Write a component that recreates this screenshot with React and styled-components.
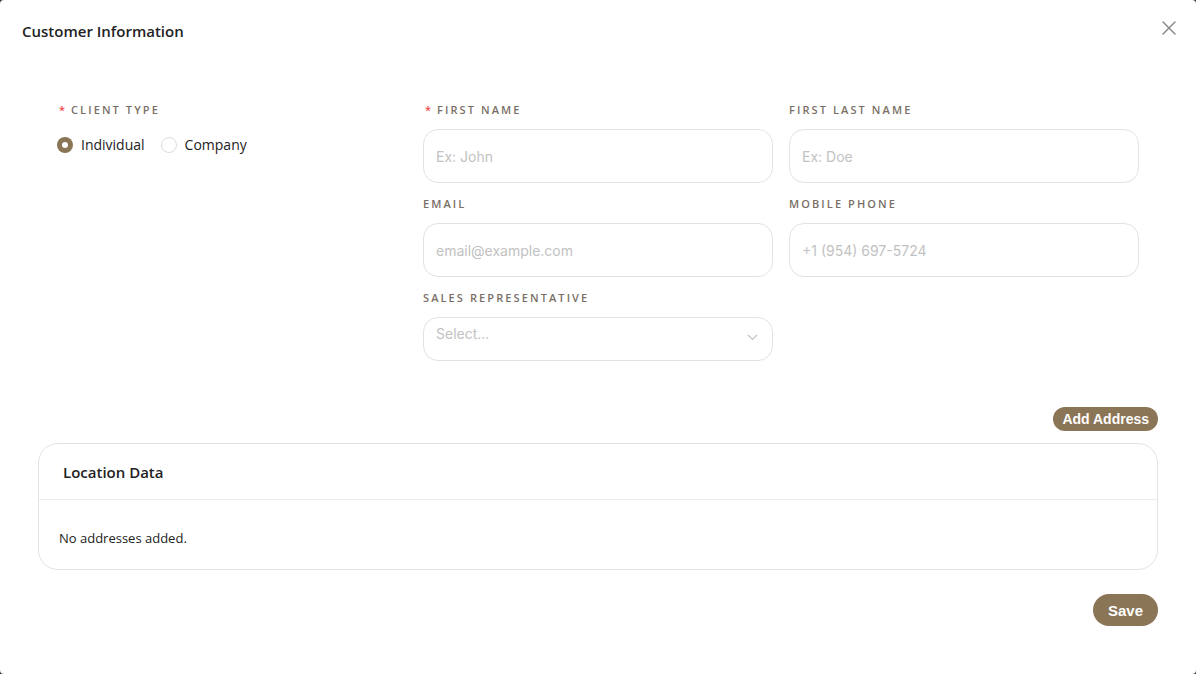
import React, { useState } from "react";
import styled, { createGlobalStyle } from "styled-components";

const GlobalStyle = createGlobalStyle`
  html, body {
    margin: 0;
    padding: 0;
    background: #3a3a3a;
  }
  * {
    box-sizing: border-box;
  }
`;

const Modal = styled.div`
  width: 1196px;
  height: 674px;
  background: #ffffff;
  border-radius: 4px;
  display: flex;
  flex-direction: column;
  position: relative;
  font-family: "Open Sans", "Noto Sans", sans-serif;
`;

const Header = styled.div`
  display: flex;
  align-items: center;
  justify-content: space-between;
  padding: 20px 20px 0 22px;
`;

const Title = styled.h2`
  margin: 0;
  font-size: 15px;
  line-height: 22px;
  font-weight: 600;
  color: #222222;
`;

const CloseButton = styled.button`
  position: absolute;
  top: 18px;
  right: 17px;
  width: 20px;
  height: 20px;
  border: none;
  background: none;
  padding: 0;
  cursor: pointer;
  display: flex;
  align-items: center;
  justify-content: center;
`;

const Body = styled.div`
  padding: 60px 38px 0 38px;
  display: flex;
  flex-direction: column;
`;

const FormGrid = styled.div`
  display: grid;
  grid-template-columns: repeat(3, 350px);
  column-gap: 16px;
  row-gap: 13px;
  padding: 0 19px;
`;

const Field = styled.div`
  display: flex;
  flex-direction: column;
  grid-column: ${({ col }) => col};
  grid-row: ${({ row }) => row};
`;

const Label = styled.label`
  font-size: 11px;
  line-height: 16px;
  font-weight: 600;
  letter-spacing: 2.1px;
  text-transform: uppercase;
  color: #7a6f66;
  margin-bottom: ${({ gap }) => gap ?? 11}px;
  display: flex;
  align-items: center;
`;

const Required = styled.span`
  color: #f04a4a;
  margin-right: 6px;
  margin-left: 2px;
  font-size: 11px;
  letter-spacing: 0;
`;

const Input = styled.input`
  height: ${({ tall }) => (tall ? 54 : 44)}px;
  border: 1px solid #e2e2e2;
  border-radius: 15px;
  padding: 0 12px;
  font-family: "Inter", "Roboto", sans-serif;
  font-size: 14px;
  color: #333;
  outline: none;
  background: #fff;
  &::placeholder {
    color: #c2c2c2;
  }
`;

const SelectBox = styled.div`
  height: 44px;
  border: 1px solid #e2e2e2;
  border-radius: 15px;
  padding: 7px 14px 0 12px;
  display: flex;
  justify-content: space-between;
  font-family: "Inter", "Roboto", sans-serif;
  font-size: 14px;
  color: #c2c2c2;
`;

const Chevron = styled.span`
  margin-top: 9px;
  display: flex;
`;

const RadioRow = styled.div`
  display: flex;
  align-items: center;
  gap: 16px;
  margin-top: 17px;
`;

const RadioOption = styled.label`
  display: flex;
  align-items: center;
  gap: 8px;
  font-size: 14px;
  color: #222;
  cursor: pointer;
`;

const RadioDot = styled.span`
  width: 16px;
  height: 16px;
  border-radius: 50%;
  border: ${({ checked }) => (checked ? "none" : "1px solid #dcdcdc")};
  background: ${({ checked }) => (checked ? "#8b7557" : "#fff")};
  display: flex;
  align-items: center;
  justify-content: center;
  &::after {
    content: "";
    width: 6px;
    height: 6px;
    border-radius: 50%;
    background: #fff;
    display: ${({ checked }) => (checked ? "block" : "none")};
  }
`;

const Actions = styled.div`
  display: flex;
  justify-content: flex-end;
  margin-top: ${({ top }) => top}px;
`;

const PillButton = styled.button`
  height: ${({ size }) => (size === "lg" ? 32 : 24)}px;
  padding: 0 ${({ size }) => (size === "lg" ? 15 : 9)}px;
  border-radius: 16px;
  border: none;
  background: #8b7557;
  color: #fff;
  font-family: "Liberation Sans", Arial, sans-serif;
  font-weight: 700;
  font-size: ${({ size }) => (size === "lg" ? 15 : 14)}px;
  cursor: pointer;
`;

const Card = styled.div`
  margin-top: 12px;
  border: 1px solid #e3e3e3;
  border-radius: 20px;
  display: flex;
  flex-direction: column;
`;

const CardHeader = styled.div`
  height: 56px;
  display: flex;
  align-items: center;
  padding: 0 24px;
  border-bottom: 1px solid #ececec;
  font-size: 15px;
  font-weight: 600;
  color: #222;
`;

const CardBody = styled.div`
  padding: 28px 20px 21px;
  font-size: 13px;
  line-height: 20px;
  color: #222;
`;

export default function App() {
  const [clientType, setClientType] = useState("individual");

  return (
    <>
      <GlobalStyle />
      <Modal>
        <Header>
          <Title>Customer Information</Title>
        </Header>
        <CloseButton aria-label="Close">
          <svg width="14" height="14" viewBox="0 0 14 14" fill="none">
            <path d="M1 1L13 13M13 1L1 13" stroke="#8a8a8a" strokeWidth="1.5" strokeLinecap="round" />
          </svg>
        </CloseButton>
        <Body>
          <FormGrid>
            <Field col={1} row={1}>
              <Label gap={0}>
                <Required>*</Required>Client Type
              </Label>
              <RadioRow>
                <RadioOption onClick={() => setClientType("individual")}>
                  <RadioDot checked={clientType === "individual"} />
                  Individual
                </RadioOption>
                <RadioOption onClick={() => setClientType("company")}>
                  <RadioDot checked={clientType === "company"} />
                  Company
                </RadioOption>
              </RadioRow>
            </Field>
            <Field col={2} row={1}>
              <Label>
                <Required>*</Required>First Name
              </Label>
              <Input tall placeholder="Ex: John" />
            </Field>
            <Field col={3} row={1}>
              <Label>First Last Name</Label>
              <Input tall placeholder="Ex: Doe" />
            </Field>
            <Field col={2} row={2}>
              <Label>Email</Label>
              <Input tall placeholder="email@example.com" />
            </Field>
            <Field col={3} row={2}>
              <Label>Mobile Phone</Label>
              <Input tall placeholder="+1 (954) 697-5724" />
            </Field>
            <Field col={2} row={3}>
              <Label>Sales Representative</Label>
              <SelectBox>
                <span>Select...</span>
                <Chevron>
                  <svg width="11" height="7" viewBox="0 0 11 7" fill="none">
                    <path d="M1 1L5.5 5.5L10 1" stroke="#c4c4c4" strokeWidth="1.2" />
                  </svg>
                </Chevron>
              </SelectBox>
            </Field>
          </FormGrid>

          <Actions top={46}>
            <PillButton>Add Address</PillButton>
          </Actions>

          <Card>
            <CardHeader>Location Data</CardHeader>
            <CardBody>No addresses added.</CardBody>
          </Card>

          <Actions top={24}>
            <PillButton size="lg">Save</PillButton>
          </Actions>
        </Body>
      </Modal>
    </>
  );
}
